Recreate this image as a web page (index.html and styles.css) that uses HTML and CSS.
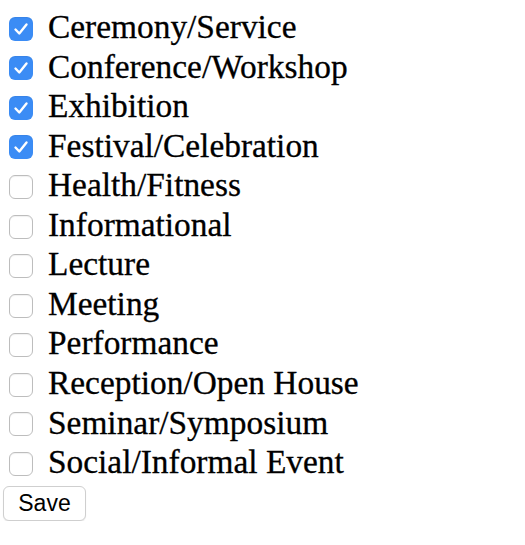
FILE: index.html
```html
<!DOCTYPE html>
<html>
<head>
<meta charset="utf-8">
<link rel="stylesheet" href="styles.css">
</head>
<body>
<form class="form">
  <label class="row"><input type="checkbox" class="cb" checked><span class="lbl">Ceremony/Service</span></label>
  <label class="row"><input type="checkbox" class="cb" checked><span class="lbl">Conference/Workshop</span></label>
  <label class="row"><input type="checkbox" class="cb" checked><span class="lbl">Exhibition</span></label>
  <label class="row"><input type="checkbox" class="cb" checked><span class="lbl">Festival/Celebration</span></label>
  <label class="row"><input type="checkbox" class="cb"><span class="lbl">Health/Fitness</span></label>
  <label class="row"><input type="checkbox" class="cb"><span class="lbl">Informational</span></label>
  <label class="row"><input type="checkbox" class="cb"><span class="lbl">Lecture</span></label>
  <label class="row"><input type="checkbox" class="cb"><span class="lbl">Meeting</span></label>
  <label class="row"><input type="checkbox" class="cb"><span class="lbl">Performance</span></label>
  <label class="row"><input type="checkbox" class="cb"><span class="lbl">Reception/Open House</span></label>
  <label class="row"><input type="checkbox" class="cb"><span class="lbl">Seminar/Symposium</span></label>
  <label class="row"><input type="checkbox" class="cb"><span class="lbl">Social/Informal Event</span></label>
  <button type="button" class="save">Save</button>
</form>
</body>
</html>
```
FILE: styles.css
```css
html, body {
  margin: 0;
  padding: 0;
  background: #ffffff;
}
.form {
  display: flex;
  flex-direction: column;
  align-items: flex-start;
  padding: 8px 0 0 0;
}
.row {
  display: flex;
  align-items: center;
  height: 39.55px;
  font-family: "Liberation Serif", "Times New Roman", serif;
  font-size: 33.4px;
  color: #000;
}
.cb {
  appearance: none;
  -webkit-appearance: none;
  width: 24px;
  height: 24px;
  margin: 2px 15px 0 9px;
  border: 1px solid #bdbdbd;
  border-radius: 6px;
  background: #fff;
  box-sizing: border-box;
  box-shadow: inset 0 1px 1px rgba(0,0,0,0.06);
  flex: none;
}
.cb:checked {
  border: none;
  background: #3b8cf5 url("data:image/svg+xml;utf8,<svg xmlns='http://www.w3.org/2000/svg' viewBox='0 0 24 24'><path d='M6.5 12.5l3.8 4 7.2-9' fill='none' stroke='white' stroke-width='2.4' stroke-linecap='round' stroke-linejoin='round'/></svg>") center/100% 100% no-repeat;
}
.lbl {
  line-height: 1;
  padding-bottom: 2px;
  -webkit-text-stroke: 0.3px #000;
}
.save {
  margin: 3px 0 0 3px;
  width: 83px;
  height: 35px;
  border: 1px solid #cfcfcf;
  border-radius: 6px;
  background: #fff;
  font-family: "Liberation Sans", Arial, sans-serif;
  font-size: 23px;
  color: #000;
  box-shadow: 0 1px 1px rgba(0,0,0,0.08);
  padding: 0;
}
```
